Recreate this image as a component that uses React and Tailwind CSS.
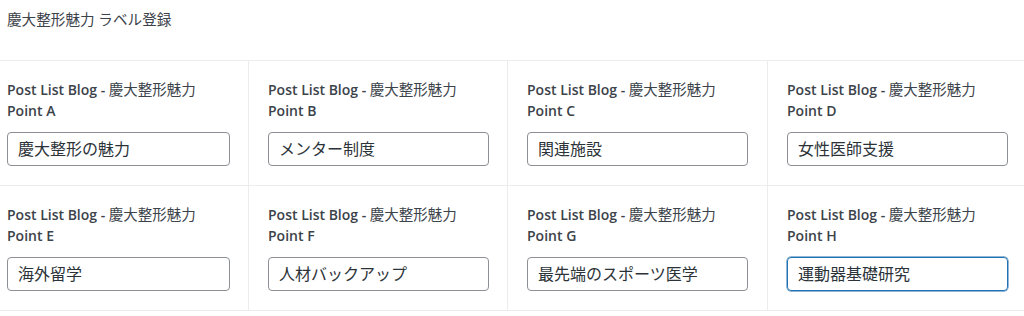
export default function App() {
  const items = [
    ["A", "慶大整形の魅力"],
    ["B", "メンター制度"],
    ["C", "関連施設"],
    ["D", "女性医師支援"],
    ["E", "海外留学"],
    ["F", "人材バックアップ"],
    ["G", "最先端のスポーツ医学"],
    ["H", "運動器基礎研究"],
  ];
  const font = { fontFamily: '"Open Sans", "Noto Sans CJK JP", sans-serif' };
  return (
    <div className="w-[1024px] h-[316px] bg-white overflow-hidden text-[#3c434a]" style={font}>
      <div className="h-[60px] pl-[7px] pt-[9px] text-[14.6px] leading-[21px]">慶大整形魅力 ラベル登録</div>
      <div className="grid grid-cols-[248px_259px_260px_257px] border-t border-[#ececed]">
        {items.map(([p, v], i) => (
          <div
            key={p}
            className={`h-[125px] border-b border-[#ececed] pt-[18px] pr-[19px] ${i % 4 === 0 ? "pl-[7px]" : "pl-[19px] border-l"} ${i === 7 ? "pr-[17px]" : ""}`}
          >
            <div className="text-[14px] leading-[21px] whitespace-nowrap">
              <span className="font-semibold">Post List Blog -</span> <span className="text-[14.5px]">慶大整形魅力</span>
            </div>
            <div className="text-[14px] leading-[21px] font-semibold">Point {p}</div>
            <div
              className={`mt-[11px] h-[34px] rounded-[4px] border flex items-center pl-[10px] text-[16px] text-[#2c3338] ${i === 7 ? "border-[#2271b1] shadow-[0_0_0_0.5px_#2271b1]" : "border-[#8c8f94]"} ${i % 4 === 0 ? "w-[223px]" : "w-[221px]"}`}
            >
              {v}
            </div>
          </div>
        ))}
      </div>
    </div>
  );
}
